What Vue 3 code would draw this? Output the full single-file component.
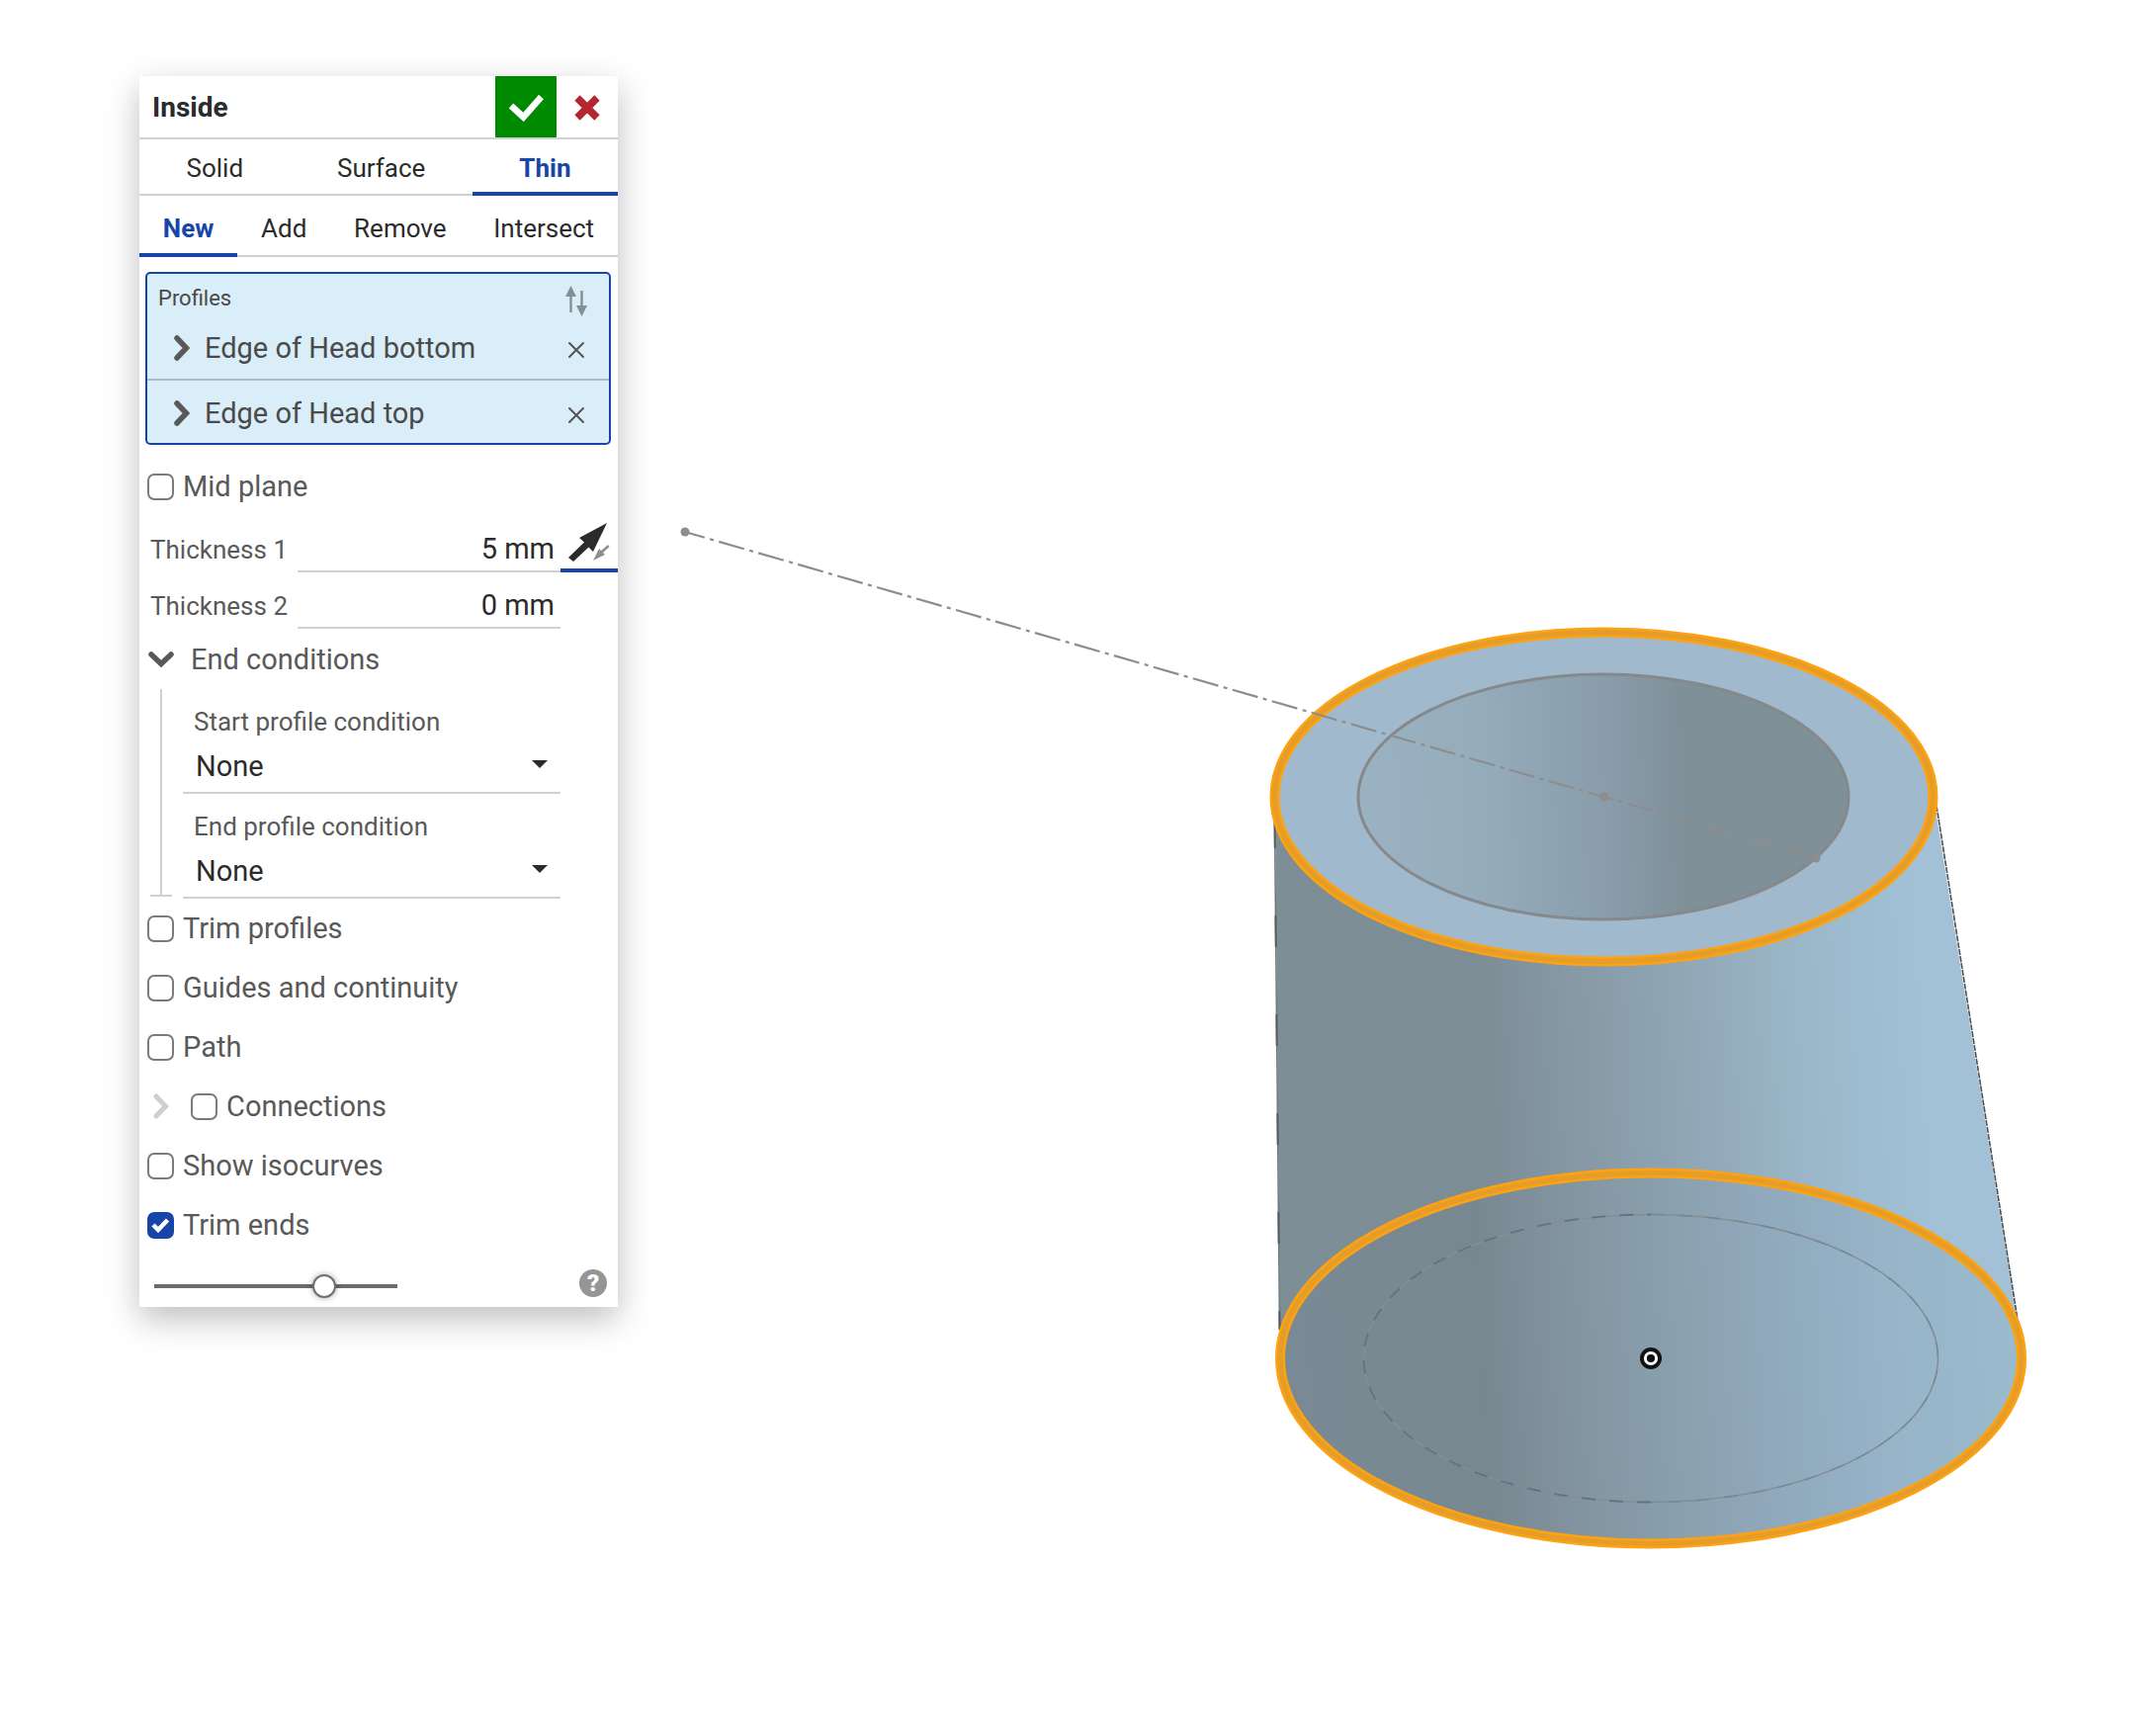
<script setup>
import { ref } from 'vue'

const bodyTypes = ['Solid', 'Surface', 'Thin']
const bodyType = ref('Thin')
const operations = ['New', 'Add', 'Remove', 'Intersect']
const operation = ref('New')

const name = ref('Inside')
const profiles = ref(['Edge of Head bottom', 'Edge of Head top'])
const midPlane = ref(false)
const thickness = ref([
  { id: 'thickness-1', label: 'Thickness 1', value: '5 mm', flip: true },
  { id: 'thickness-2', label: 'Thickness 2', value: '0 mm', flip: false },
])
const conditions = ref([
  { id: 'start-condition', label: 'Start profile condition', value: 'None' },
  { id: 'end-condition', label: 'End profile condition', value: 'None' },
])
const options = ref([
  { id: 'trim-profiles', label: 'Trim profiles', on: false },
  { id: 'guides', label: 'Guides and continuity', on: false },
  { id: 'path', label: 'Path', on: false },
  { id: 'connections', label: 'Connections', on: false, expandable: true },
  { id: 'isocurves', label: 'Show isocurves', on: false },
  { id: 'trim-ends', label: 'Trim ends', on: true },
])
const opacity = ref(72)
</script>

<template>
  <main class="workspace">
    <svg class="scene" viewBox="0 0 2178 1756" aria-hidden="true">
      <defs>
        <linearGradient id="wall" gradientUnits="userSpaceOnUse" x1="1290" y1="1080" x2="2020" y2="1040">
          <stop offset="0" stop-color="#7d8e97" />
          <stop offset=".29" stop-color="#7c8d95" />
          <stop offset=".33" stop-color="#80919d" />
          <stop offset=".45" stop-color="#889ca8" />
          <stop offset=".6" stop-color="#93a9b9" />
          <stop offset=".66" stop-color="#96b0c0" />
          <stop offset=".76" stop-color="#9cb9cc" />
          <stop offset=".9" stop-color="#a2c1d6" />
          <stop offset="1" stop-color="#a2c1d6" />
        </linearGradient>
        <linearGradient id="base" gradientUnits="userSpaceOnUse" x1="1290" y1="1390" x2="2050" y2="1350">
          <stop offset="0" stop-color="#7a8a94" />
          <stop offset=".28" stop-color="#788891" />
          <stop offset=".36" stop-color="#80919d" />
          <stop offset=".52" stop-color="#899fac" />
          <stop offset=".66" stop-color="#90a9bc" />
          <stop offset=".82" stop-color="#97b4c9" />
          <stop offset="1" stop-color="#9bbbce" />
        </linearGradient>
        <linearGradient id="bore" gradientUnits="userSpaceOnUse" x1="1373" y1="810" x2="1871" y2="800">
          <stop offset="0" stop-color="#9ab2c2" />
          <stop offset=".25" stop-color="#95acba" />
          <stop offset=".5" stop-color="#899dab" />
          <stop offset=".66" stop-color="#7f9099" />
          <stop offset="1" stop-color="#7f9099" />
        </linearGradient>
      </defs>

      <path d="M1290 806 L1295 1374 A375 187.5 0 0 0 2045 1374 L2041 1340 L1956 806 Z" fill="url(#wall)" />
      <path d="M1289.5 830 L1294.5 1345" stroke="#6f777c" stroke-width="1.5" />
      <path d="M1289.5 830 L1294.5 1345" stroke="#585b5d" stroke-width="2" stroke-dasharray="32 68" stroke-dashoffset="4" />
      <path d="M1959 815 L2041 1335" stroke="#4b4f52" stroke-width="1.6" stroke-dasharray="6 1" />

      <ellipse cx="1670" cy="1374" rx="375" ry="187.5" fill="url(#base)" stroke="#fda313" stroke-width="10" />
      <ellipse cx="1670" cy="1374" rx="375" ry="187.5" fill="none" stroke="#e59d27" stroke-width="5" />
      <ellipse cx="1670" cy="1374" rx="290.5" ry="145.5" fill="none" stroke="#8a8d90" stroke-width="1.6" />
      <path d="M1670 1519.5 A290.5 145.5 0 0 1 1670 1228.5" fill="none" stroke="#5f7482" stroke-width="1.8" stroke-dasharray="14 14" />
      <path d="M1670 1228.5 A290.5 145.5 0 0 1 1670 1519.5" fill="none" stroke="#6f8a9b" stroke-width="1.4" stroke-dasharray="14 14" />

      <ellipse cx="1622.5" cy="806" rx="333" ry="166.5" fill="#a0b9cd" stroke="#fda313" stroke-width="10" />
      <ellipse cx="1622.5" cy="806" rx="333" ry="166.5" fill="none" stroke="#e59d27" stroke-width="5" />
      <ellipse cx="1622" cy="806" rx="248" ry="124" fill="url(#bore)" stroke="#85898c" stroke-width="3" />

      <path
        d="M693 538 L1837 868"
        stroke="#8d8d8d"
        stroke-width="2.2"
        stroke-dasharray="26.6 5.5 4 5.5"
        stroke-dashoffset="6"
      />
      <g fill="#8d8d8d">
        <circle cx="693" cy="538" r="4.5" />
        <circle cx="1622.5" cy="806" r="4.5" />
        <circle cx="1837" cy="868" r="4.5" />
      </g>

      <circle cx="1670" cy="1374" r="11" fill="#121212" />
      <circle cx="1670" cy="1374" r="5.6" fill="none" stroke="#fff" stroke-width="3" />
    </svg>

    <form class="panel" @submit.prevent>
      <header class="title-bar">
        <h1 class="title">{{ name }}</h1>
        <button class="accept" type="submit" aria-label="Accept">
          <svg width="36" height="28" viewBox="0 0 36 28"><path d="M3 12 L15.5 23.5 L33.5 3" fill="none" stroke="#fff" stroke-width="6.5" /></svg>
        </button>
        <button class="cancel" type="button" aria-label="Cancel">
          <svg width="28" height="28" viewBox="0 0 28 28"><path d="M4 4 L24 24 M24 4 L4 24" fill="none" stroke="#b5262f" stroke-width="7.5" /></svg>
        </button>
      </header>

      <nav class="tabs">
        <button
          v-for="t in bodyTypes"
          :key="t"
          type="button"
          class="tab"
          :class="{ active: t === bodyType }"
          @click="bodyType = t"
        >{{ t }}</button>
      </nav>
      <nav class="tabs tall">
        <button
          v-for="t in operations"
          :key="t"
          type="button"
          class="tab"
          :class="{ active: t === operation }"
          @click="operation = t"
        >{{ t }}</button>
      </nav>

      <section class="profiles">
        <div class="profiles-head">
          <h2 class="profiles-label">Profiles</h2>
          <button class="bare" type="button" aria-label="Reorder profiles">
            <svg width="22" height="32" viewBox="0 0 22 32" fill="#858f93">
              <path d="M5.5 0 L11 11 H0 Z M4.3 10 H6.7 V27 H4.3 Z M15.3 5 H17.7 V21 H15.3 Z M11 20 H22 L16.5 31 Z" />
            </svg>
          </button>
        </div>
        <ul class="profile-list">
          <li v-for="(p, i) in profiles" :key="p" class="profile">
            <button class="bare" type="button" aria-label="Expand">
              <svg width="16" height="26" viewBox="0 0 16 26"><path d="M3 3 L12.5 13 L3 23" fill="none" stroke="#595959" stroke-width="5.5" stroke-linecap="round" /></svg>
            </button>
            <span class="profile-name">{{ p }}</span>
            <button class="bare remove" type="button" aria-label="Remove" @click="profiles.splice(i, 1)">
              <svg width="18" height="18" viewBox="0 0 18 18"><path d="M2 2 L16 16 M16 2 L2 16" stroke="#555" stroke-width="2" stroke-linecap="round" /></svg>
            </button>
          </li>
        </ul>
      </section>

      <div class="row">
        <input id="mid-plane" v-model="midPlane" class="tick" type="checkbox" />
        <label for="mid-plane">Mid plane</label>
      </div>

      <div v-for="t in thickness" :key="t.id" class="measure">
        <label :for="t.id">{{ t.label }}</label>
        <input :id="t.id" v-model="t.value" class="value" type="text" />
        <button v-if="t.flip" class="flip" type="button" aria-label="Opposite direction">
          <svg width="42" height="42" viewBox="0 0 42 42">
            <path d="M39 1 L25 30 L20.5 25.5 L5 40 L0 36 L16 20.5 L11 16 Z" fill="#2b2b2b" />
            <path d="M25 39 L31 27 L33 29 L40 23 L41.5 25 L35 31 L37 33 Z" fill="#8f8f8f" />
          </svg>
        </button>
        <span v-else class="flip-space"></span>
      </div>

      <button class="fold" type="button" aria-expanded="true">
        <svg width="26" height="16" viewBox="0 0 26 16"><path d="M3 3 L13 12.5 L23 3" fill="none" stroke="#595959" stroke-width="5.5" stroke-linecap="round" /></svg>
        <span>End conditions</span>
      </button>
      <div class="conditions">
        <div class="bracket"></div>
        <div class="condition-list">
          <div v-for="c in conditions" :key="c.id" class="condition">
            <label :for="c.id">{{ c.label }}</label>
            <select :id="c.id" v-model="c.value" class="choice">
              <option>None</option>
              <option>Normal to profile</option>
              <option>Tangent to profile</option>
            </select>
            <svg class="caret" width="16" height="8" viewBox="0 0 16 8"><path d="M0 0 H16 L8 8 Z" fill="#2b2b2b" /></svg>
          </div>
        </div>
      </div>

      <div v-for="o in options" :key="o.id" class="row">
        <svg v-if="o.expandable" class="row-chevron" width="26" height="26" viewBox="0 0 26 26"><path d="M9 3 L18.5 13 L9 23" fill="none" stroke="#cfcfcf" stroke-width="5" stroke-linecap="round" /></svg>
        <input :id="o.id" v-model="o.on" class="tick" type="checkbox" />
        <label :for="o.id">{{ o.label }}</label>
      </div>

      <footer class="foot">
        <input v-model="opacity" class="slider" type="range" min="0" max="100" aria-label="Preview opacity" />
        <button class="help" type="button" aria-label="Help">?</button>
      </footer>
    </form>
  </main>
</template>

<style>
body {
  margin: 0;
  background: #fff;
}
</style>

<style scoped>
.workspace {
  display: grid;
  grid-template-columns: minmax(0, 1fr);
  align-items: start;
  font-family: Roboto, "Liberation Sans", sans-serif;
  font-size: 29px;
  color: #595959;
}
.scene,
.panel {
  grid-area: 1 / 1;
}
.scene {
  display: block;
  width: 100%;
  height: auto;
}
.panel {
  position: relative;
  box-sizing: border-box;
  width: 484px;
  max-width: 100%;
  margin: 77px 0 0 141px;
  background: #fff;
  box-shadow: 0 12px 32px rgba(0, 0, 0, 0.26);
}
button,
input,
select {
  margin: 0;
  padding: 0;
  border: 0;
  background: none;
  font: inherit;
  color: inherit;
}
svg {
  display: block;
}

.title-bar {
  display: flex;
  align-items: stretch;
  height: 62px;
  border-bottom: 2px solid #d0d0d0;
}
.title {
  flex: 1;
  margin: 0;
  padding-left: 13px;
  font-size: 28px;
  line-height: 64px;
  color: #2b2b2b;
}
.accept,
.cancel {
  display: grid;
  place-items: center;
  width: 62px;
  padding-top: 2px;
}
.accept {
  background: #008a00;
}

.tabs {
  display: flex;
  height: 57px;
  font-size: 26px;
  color: #2b2b2b;
  box-shadow: inset 0 -2px #d0d0d0;
}
.tabs.tall {
  height: 62px;
}
.tab {
  flex: 1 1 auto;
  padding-top: 4px;
  border-bottom: 4px solid transparent;
}
.tall .tab {
  padding-top: 8px;
}
.tab.active {
  border-color: #1746a8;
  font-weight: 700;
  color: #1746a8;
}

.profiles {
  margin: 15px 7px 12px 6px;
  border: 2px solid #1746a8;
  border-radius: 5px;
  background: #d9eef9;
  color: #4a4a4a;
}
.profiles-head {
  display: flex;
  justify-content: space-between;
  align-items: flex-start;
  height: 44px;
  padding: 12px 22px 0 11px;
  box-sizing: border-box;
}
.profiles-label {
  margin: 0;
  font-size: 22px;
  font-weight: 400;
  line-height: 26px;
}
.profile-list {
  margin: 0;
  padding: 0;
  list-style: none;
}
.profile {
  box-sizing: border-box;
  display: flex;
  align-items: center;
  height: 63px;
  padding: 0 24px 0 27px;
}
.profile:first-child {
  height: 64px;
  border-bottom: 2px solid #abbcc4;
}
.profile:last-child {
  padding-top: 2px;
}
.profile-name {
  flex: 1;
  padding-left: 15px;
}
.remove {
  padding-top: 4px;
}

.row {
  display: flex;
  align-items: center;
  gap: 9px;
  height: 60px;
  padding-left: 8px;
}
.row-chevron {
  margin-right: 9px;
}
.tick {
  appearance: none;
  width: 27px;
  height: 27px;
  border: 2px solid #7a7a7a;
  border-radius: 7px;
}
.tick:checked {
  border-color: #1746a8;
  background: #1746a8 url("data:image/svg+xml,%3Csvg xmlns='http://www.w3.org/2000/svg' viewBox='0 0 23 23'%3E%3Cpath d='M4 11 L9 16 L18.5 6' fill='none' stroke='white' stroke-width='4.5'/%3E%3C/svg%3E") center / 23px 23px no-repeat;
}

.measure {
  display: flex;
  height: 57px;
  padding-left: 11px;
  font-size: 26px;
  line-height: 68px;
}
.value {
  flex: 1;
  min-width: 0;
  margin-left: 10px;
  padding: 10px 6px 0 0;
  border-bottom: 2px solid #d0d0d0;
  font-size: 29px;
  text-align: right;
  color: #2b2b2b;
}
.flip,
.flip-space {
  width: 58px;
}
.flip {
  padding: 0 0 0 8px;
  border-bottom: 4px solid #1746a8;
}

.fold {
  display: flex;
  align-items: center;
  gap: 17px;
  width: 100%;
  height: 61px;
  padding-left: 9px;
}
.conditions {
  display: flex;
}
.bracket {
  width: 22px;
  margin: 0 11px 2px 11px;
  background: linear-gradient(#d0d0d0, #d0d0d0) center / 2px 100% no-repeat;
  border-bottom: 2px solid #d0d0d0;
}
.condition-list {
  flex: 1;
  margin-right: 58px;
}
.condition {
  position: relative;
  box-sizing: border-box;
  height: 106px;
  padding-top: 17px;
  border-bottom: 2px solid #d0d0d0;
}
.condition label {
  display: block;
  padding-left: 11px;
  font-size: 26px;
  line-height: 32px;
}
.choice {
  appearance: none;
  width: 100%;
  height: 58px;
  padding-left: 13px;
  color: #2b2b2b;
}
.caret {
  position: absolute;
  right: 13px;
  bottom: 24px;
  pointer-events: none;
}

.foot {
  display: flex;
  justify-content: space-between;
  height: 53px;
  padding: 0 11px 0 15px;
}
.slider {
  appearance: none;
  width: 246px;
  height: 24px;
  margin-top: 20px;
  background: linear-gradient(#6b6b6b, #6b6b6b) center / 100% 4px no-repeat;
}
.slider::-webkit-slider-thumb {
  appearance: none;
  width: 24px;
  height: 24px;
  border: 2px solid #6f6f6f;
  border-radius: 50%;
  background: #fff;
  box-shadow: 0 0 6px rgba(0, 0, 0, 0.35);
}
.help {
  width: 28px;
  height: 28px;
  margin-top: 15px;
  border-radius: 50%;
  background: #959595;
  font-size: 24px;
  font-weight: 900;
  line-height: 28px;
  color: #fff;
}
</style>
